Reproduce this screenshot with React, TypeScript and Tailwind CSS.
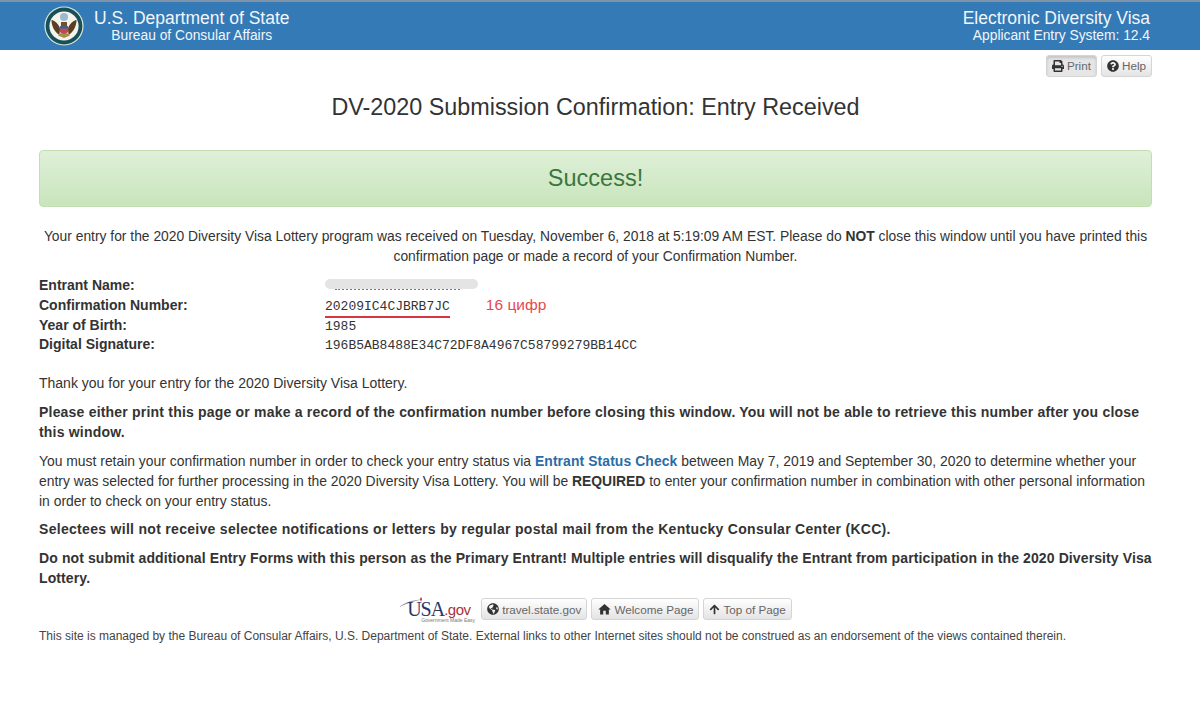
import type { ReactNode } from "react";
import { FaPrint, FaQuestionCircle, FaGlobeAmericas, FaArrowUp } from "react-icons/fa";
import { MdHome } from "react-icons/md";

const Seal = () => (
  <svg width="40" height="40" viewBox="0 0 40 40">
    <circle cx="20" cy="20" r="19.6" fill="#dce8d6" />
    <circle cx="20" cy="20" r="18.4" fill="#17505a" />
    <circle cx="20" cy="20" r="14.6" fill="#f4f3ec" />
    <circle cx="20" cy="11" r="4" fill="#9db9cf" />
    <path d="M7.500 14c3.500.5 7 4 8.500 8.500l-.5 6.500C10.500 26 7.500 20 7.500 14zM32.500 14c-3.500.5-7 4-8.500 8.500l.5 6.500c5-3 8-9 8-15z" fill="#5b3f24" />
    <path d="M17 16h6v4h-6z" fill="#6d5230" />
    <path d="M16 20h8v6l-4 4-4-4z" fill="#bb4b52" />
    <path d="M16 20h8v2.500h-8z" fill="#41608f" />
    <path d="M14 29.500l6 2.500 6-2.500-2-2h-8z" fill="#a98c48" />
  </svg>
);

const UsaGov = () => (
  <div className="relative mr-[4px] h-[26px] w-[74px]">
    <svg className="absolute left-0 top-0" width="40" height="14" viewBox="0 0 40 14">
      <path d="M0 11C7 6 14 4 23 3.500 16 5 8 7.500 0 11z" fill="#8a8f9c" />
      <path d="M22 1l1 2-1 3-1-3z" fill="#b3303c" />
    </svg>
    <span className="absolute left-[8px] top-[1px] font-['Liberation_Serif',serif] text-[20px] leading-[24px] tracking-[-1px] text-[#2c3566]">USA</span>
    <span className="absolute left-[45px] top-[3px] font-['Liberation_Sans',sans-serif] text-[15px] leading-[22px] tracking-[-0.500px] text-[#a8323e]">.gov</span>
    <span className="absolute left-[22px] top-[21px] whitespace-nowrap text-[5px] leading-[6px] text-[#777]">Government Made Easy</span>
  </div>
);

const Btn = ({ children, className = "" }: { children: ReactNode; className?: string }) => (
  <span className={`inline-flex h-[22px] items-center gap-[2px] rounded-[3px] border border-[#d5d5d5] bg-gradient-to-b from-white to-[#e4e4e4] px-[5px] text-[11.700px] text-[#666] ${className}`}>
    {children}
  </span>
);

export default function App() {
  return (
    <div className="min-h-[707px] bg-white font-['Liberation_Sans',Arial,sans-serif] text-[14px] leading-[19.700px] text-[#333]">
      <header className="flex h-[50px] items-center justify-between border-t-2 border-[#7f94a8] bg-[#337ab7] pl-[44px] pr-[50px] text-[#f2f6fa]">
        <div className="flex items-center gap-[10px]">
          <Seal />
          <div className="text-center">
            <div className="text-[17.500px] leading-[18px]">U.S. Department of State</div>
            <div className="text-[13.800px] leading-[17px]">Bureau of Consular Affairs</div>
          </div>
        </div>
        <div className="text-right">
          <div className="text-[17.500px] leading-[18px]">Electronic Diversity Visa</div>
          <div className="text-[13.800px] leading-[17px]">Applicant Entry System: 12.4</div>
        </div>
      </header>

      <main className="pl-[39px] pr-[48px]">
        <div className="flex justify-end gap-[4px] pt-[5px]">
          <Btn className="border-[#aaa] bg-none bg-[#e6e6e6] shadow-[inset_0_2px_3px_rgba(0,0,0,.15)]">
            <FaPrint className="mr-[1px] text-[12px] text-[#333]" />Print
          </Btn>
          <Btn><FaQuestionCircle className="mr-[1px] text-[12px] text-[#333]" />Help</Btn>
        </div>

        <h1 className="mt-[15px] text-center text-[23.350px] leading-[30px] text-[#333]">DV-2020 Submission Confirmation: Entry Received</h1>

        <div className="mt-[28px] flex h-[57px] items-center justify-center rounded-[4px] border border-[#c3dfb1] bg-gradient-to-b from-[#dff0d8] to-[#c8e5bc] text-[23.500px] text-[#3c763d]">
          Success!
        </div>

        <p className="mt-[20px] text-center text-[13.850px]">
          Your entry for the 2020 Diversity Visa Lottery program was received on Tuesday, November 6, 2018 at 5:19:09 AM EST. Please do <b>NOT</b> close this window until you have printed this confirmation page or made a record of your Confirmation Number.
        </p>

        <div className="mt-[10px] grid auto-rows-[19.700px] grid-cols-[286px_1fr] items-baseline">
          <b>Entrant Name:</b>
          <div className="relative">
            &nbsp;
            <span className="absolute left-[10px] top-[12px] h-[2px] w-[125px] border-b-2 border-dotted border-[#777]" />
            <span className="absolute left-0 top-[3px] h-[10px] w-[153px] rounded-full bg-[#e4e4e4]" />
          </div>
          <b>Confirmation Number:</b>
          <div className="font-['Liberation_Mono',monospace] text-[13px]">
            <span className="border-b-2 border-[#d9343f] pb-[2px]">20209IC4CJBRB7JC</span>
            <span className="ml-[36px] font-['Liberation_Sans',sans-serif] text-[15.500px] leading-none text-[#e8474f]">16 цифр</span>
          </div>
          <b>Year of Birth:</b>
          <div className="font-['Liberation_Mono',monospace] text-[13px]">1985</div>
          <b>Digital Signature:</b>
          <div className="font-['Liberation_Mono',monospace] text-[13px]">196B5AB8488E34C72DF8A4967C58799279BB14CC</div>
        </div>

        <p className="mt-[19px]">Thank you for your entry for the 2020 Diversity Visa Lottery.</p>
        <p className="mt-[9px] font-bold tracking-[0.200px]">Please either print this page or make a record of the confirmation number before closing this window. You will not be able to retrieve this number after you close this window.</p>
        <p className="mt-[10px] text-[13.900px]">
          You must retain your confirmation number in order to check your entry status via <b className="tracking-[0.100px] text-[#2a6ca5]">Entrant Status Check</b> between May 7, 2019 and September 30, 2020 to determine whether your entry was selected for further processing in the 2020 Diversity Visa Lottery. You will be <b>REQUIRED</b> to enter your confirmation number in combination with other personal information in order to check on your entry status.
        </p>
        <p className="mt-[9px] font-bold tracking-[0.300px]">Selectees will not receive selectee notifications or letters by regular postal mail from the Kentucky Consular Center (KCC).</p>
        <p className="mt-[9px] font-bold tracking-[0.110px]">Do not submit additional Entry Forms with this person as the Primary Entrant! Multiple entries will disqualify the Entrant from participation in the 2020 Diversity Visa Lottery.</p>

        <div className="mt-[8px] flex items-center justify-center gap-[4px]">
          <UsaGov />
          <Btn><FaGlobeAmericas className="mr-[1px] text-[12px] text-[#333]" />travel.state.gov</Btn>
          <Btn><MdHome className="text-[15px] text-[#333]" />Welcome Page</Btn>
          <Btn><FaArrowUp className="mr-[1px] text-[11px] text-[#333]" />Top of Page</Btn>
        </div>

        <p className="mt-[6px] text-[12px] leading-[16px] text-[#444]">This site is managed by the Bureau of Consular Affairs, U.S. Department of State. External links to other Internet sites should not be construed as an endorsement of the views contained therein.</p>
      </main>
    </div>
  );
}
